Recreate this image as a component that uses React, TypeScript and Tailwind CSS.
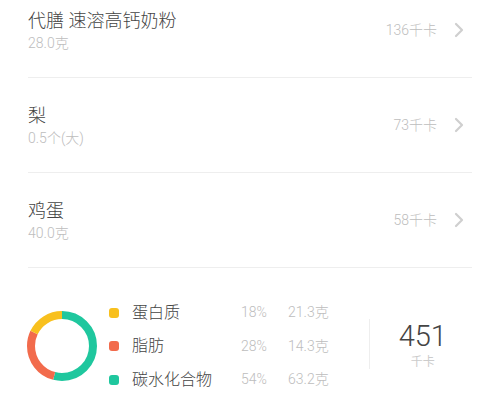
import React from "react";

const foods = [
  { name: "代膳 速溶高钙奶粉", amount: "28.0克", kcal: "136千卡" },
  { name: "梨", amount: "0.5个(大)", kcal: "73千卡" },
  { name: "鸡蛋", amount: "40.0克", kcal: "58千卡" },
];

const nutrients = [
  { label: "蛋白质", pct: "18%", grams: "21.3克", dot: "bg-[#f8c01e]" },
  { label: "脂肪", pct: "28%", grams: "14.3克", dot: "bg-[#f26b4c]" },
  { label: "碳水化合物", pct: "54%", grams: "63.2克", dot: "bg-[#1fc79e]" },
];

const Chevron = () => (
  <svg width="10" height="16" viewBox="0 0 10 16" fill="none">
    <path d="M2 2l6 6-6 6" stroke="#cfcfcf" strokeWidth="2.2" strokeLinecap="round" strokeLinejoin="round" />
  </svg>
);

const Donut = () => {
  const r = 31;
  const c = 2 * Math.PI * r;
  const segs = [
    { pct: 0.54, color: "#1fc79e" },
    { pct: 0.28, color: "#f26b4c" },
    { pct: 0.18, color: "#f8c01e" },
  ];
  let offset = 0;
  return (
    <svg width="72" height="72" viewBox="0 0 72 72">
      <g transform="rotate(-90 36 36)">
        {segs.map((s, i) => {
          const len = s.pct * c;
          const el = (
            <circle
              key={i}
              cx="36"
              cy="36"
              r={r}
              fill="none"
              stroke={s.color}
              strokeWidth="8"
              strokeDasharray={`${len} ${c - len}`}
              strokeDashoffset={-offset}
            />
          );
          offset += len;
          return el;
        })}
      </g>
    </svg>
  );
};

const App: React.FC = () => {
  return (
    <div
      className="w-[500px] h-[400px] overflow-hidden bg-white"
      style={{ fontFamily: 'Roboto, "Noto Sans CJK SC", sans-serif' }}
    >
      <div className="-mt-[17px] px-[28px]">
        {foods.map((f, i) => (
          <div
            key={i}
            className="h-[95px] flex items-center justify-between border-b border-[#eeeeee]"
          >
            <div className="flex flex-col">
              <span className="text-[18px] leading-[25px] font-light text-[#444444]">{f.name}</span>
              <span className="text-[14px] leading-[20px] font-light text-[#bdbdbd]">{f.amount}</span>
            </div>
            <div className="flex items-center gap-[17px] pr-[8px]">
              <span className="text-[14px] font-light text-[#bdbdbd]">{f.kcal}</span>
              <Chevron />
            </div>
          </div>
        ))}
      </div>

      <div className="flex items-center pl-[26px] pt-[28px]">
        <Donut />
        <div className="ml-[11px] flex flex-col">
          {nutrients.map((n, i) => (
            <div key={i} className="h-[33.5px] flex items-center">
              <span className={`w-[10px] h-[10px] rounded-[3px] ${n.dot}`} />
              <span className="ml-[13px] w-[109px] text-[16px] font-light text-[#444444]">{n.label}</span>
              <span className="w-[47px] text-[14px] font-light text-[#bdbdbd]">{n.pct}</span>
              <span className="text-[14px] font-light text-[#bdbdbd]">{n.grams}</span>
            </div>
          ))}
        </div>
        <div className="ml-[40px] h-[50px] w-px bg-[#eeeeee] -mt-[4px]" />
        <div className="ml-[29px] flex flex-col items-start -mt-[2px]">
          <span className="text-[29px] leading-[34px] font-light text-[#444444]">451</span>
          <span className="ml-[12px] text-[12px] text-[#cccccc]">千卡</span>
        </div>
      </div>
    </div>
  );
};

export default App;
